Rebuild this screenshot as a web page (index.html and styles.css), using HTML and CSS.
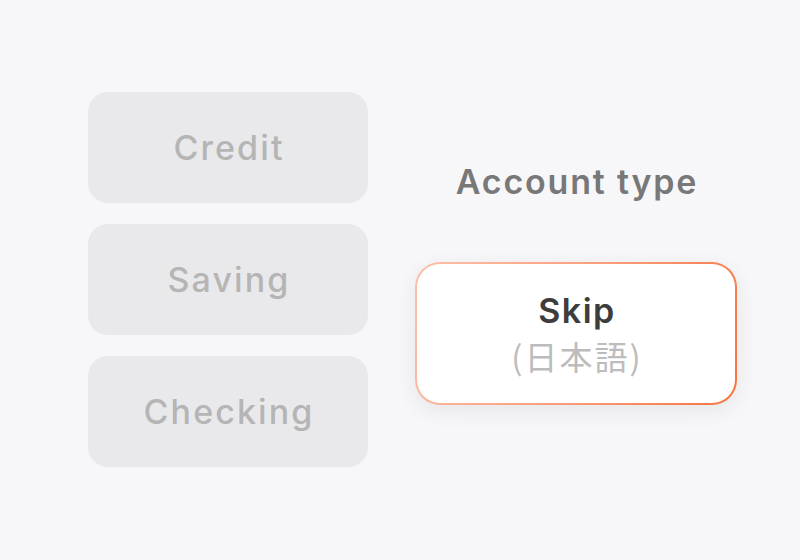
FILE: index.html
```html
<!DOCTYPE html>
<html lang="en">
<head>
<meta charset="utf-8">
<title>Account type</title>
<link rel="stylesheet" href="styles.css">
</head>
<body>
<main class="screen">
  <section class="options">
    <div class="option">Credit</div>
    <div class="option">Saving</div>
    <div class="option">Checking</div>
  </section>
  <section class="panel">
    <h1 class="title">Account type</h1>
    <button class="skip">
      <span class="skip-label">Skip</span>
      <span class="skip-sub">(日本語)</span>
    </button>
  </section>
</main>
</body>
</html>
```
FILE: styles.css
```css
html, body {
  margin: 0;
  padding: 0;
}
body {
  background: #f7f7f9;
  font-family: "Inter", "Noto Sans", "Noto Sans CJK JP", sans-serif;
  width: 800px;
  height: 560px;
  overflow: hidden;
}
.screen {
  display: flex;
  align-items: flex-start;
  gap: 47px;
  padding-left: 88px;
}
.options {
  display: flex;
  flex-direction: column;
  gap: 21px;
  margin-top: 92px;
  width: 280px;
}
.option {
  height: 111px;
  border-radius: 20px;
  background: #e9e9eb;
  color: #b5b5b5;
  font-size: 34px;
  font-weight: 500;
  letter-spacing: 2.1px;
  padding-left: 2px;
  display: flex;
  align-items: center;
  justify-content: center;
}
.panel {
  display: flex;
  flex-direction: column;
  align-items: center;
  width: 322px;
  margin-top: 162px;
}
.title {
  margin: 0;
  font-size: 34px;
  line-height: 40px;
  font-weight: 600;
  letter-spacing: 1.8px;
  padding-left: 2px;
  color: #787878;
}
.skip {
  margin-top: 60px;
  width: 322px;
  height: 143px;
  box-sizing: border-box;
  border: 2px solid transparent;
  border-radius: 25px;
  background:
    linear-gradient(#ffffff, #ffffff) padding-box,
    linear-gradient(110deg, #fcc1a9 0%, #f99a77 55%, #f6743f 100%) border-box;
  box-shadow: 0 6px 22px rgba(0, 0, 0, 0.07);
  display: flex;
  flex-direction: column;
  align-items: center;
  justify-content: center;
  gap: 5px;
  font-family: inherit;
  padding: 0;
}
.skip-label {
  font-size: 34px;
  font-weight: 600;
  letter-spacing: 1.5px;
  padding-left: 2px;
  color: #3d3d3d;
  line-height: 40px;
}
.skip-sub {
  font-size: 33px;
  color: #bcbcbc;
  line-height: 40px;
  letter-spacing: 2px;
  padding-left: 2px;
  font-family: "Noto Sans CJK JP", sans-serif;
}
```
